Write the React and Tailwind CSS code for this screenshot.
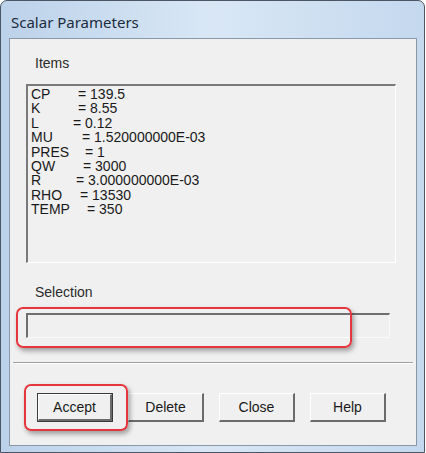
import React from "react";

const rows = [
  { n: "CP", v: "= 139.5", w: "w-[47px]" },
  { n: "K", v: "= 8.55", w: "w-[47px]" },
  { n: "L", v: "= 0.12", w: "w-[42px]" },
  { n: "MU", v: "= 1.520000000E-03", w: "w-[51px]" },
  { n: "PRES", v: "= 1", w: "w-[54px]" },
  { n: "QW", v: "= 3000", w: "w-[52px]" },
  { n: "R", v: "= 3.000000000E-03", w: "w-[45px]" },
  { n: "RHO", v: "= 13530", w: "w-[49px]" },
  { n: "TEMP", v: "= 350", w: "w-[56px]" },
];

function Btn({ label, isDefault }) {
  return (
    <div
      className={
        isDefault
          ? "w-[76px] h-[29px] border border-[#3a3a3a] bg-[#f0f0f0] flex"
          : "w-[76px] h-[29px] bg-[#f0f0f0] flex"
      }
    >
      <div className="flex-1 flex items-center justify-center border-t border-l border-t-white border-l-white border-r-2 border-b-2 border-r-[#6b6b6b] border-b-[#6b6b6b] text-[14px] text-[#1a1a1a] leading-4">
        {label}
      </div>
    </div>
  );
}

export default function App() {
  return (
    <div className="w-[426px] h-[453px] bg-white" style={{ fontFamily: '"Liberation Sans", Arial, sans-serif' }}>
      <div className="w-[425px] h-[453px] border border-[#4b5563] rounded-t-[7px] bg-gradient-to-r from-[#bcd2ea] via-[#d9e7f5] to-[#c4d8ee] flex flex-col pl-[8px] pr-[7px] pb-[6px]">
        <div className="h-[37px] flex items-center pl-[2px] pt-[4px]">
          <span className="text-[15px] text-[#1c2c40] leading-4" style={{ fontFamily: '"Noto Sans", "Open Sans", sans-serif' }}>
            Scalar Parameters
          </span>
        </div>
        <div className="flex-1 border border-[#8a97a7] bg-[#f0f0f0] relative flex flex-col pl-[16px]">
          <div className="mt-[16px] ml-[9px] h-4 text-[14px] leading-4 text-[#2a2a2a]">Items</div>
          <div className="mt-[13px] w-[370px] h-[179px] border-t-2 border-l-2 border-t-[#7a7a7a] border-l-[#7a7a7a] border-r border-b border-r-white border-b-white pt-[1px] pl-[3px]">
            {rows.map((r) => (
              <div key={r.n} className="h-[14.4px] leading-[14.4px] text-[14px] text-[#1a1a1a] whitespace-pre flex">
                <span className={r.w + " inline-block"}>{r.n}</span>
                <span>{r.v}</span>
              </div>
            ))}
          </div>
          <div className="mt-[21px] ml-[9px] h-4 text-[14px] leading-4 text-[#2a2a2a]">Selection</div>
          <div className="mt-[13px] w-[364px] h-[25px] border-t-2 border-l-2 border-t-[#6f6f6f] border-l-[#6f6f6f] border-r border-b border-r-[#fafafa] border-b-[#fafafa]" />
          <div className="mt-[24px] -ml-[13px] w-[400px] h-[2px] border-t border-t-[#a0a0a0] border-b border-b-white" />
          <div className="mt-[29px] ml-[11px] flex gap-[15px]">
            <Btn label="Accept" isDefault />
            <Btn label="Delete" />
            <Btn label="Close" />
            <Btn label="Help" />
          </div>
          <div className="absolute left-[6px] top-[268px] w-[336px] h-[41px] border-2 border-[#e5363d] rounded-[7px] shadow-[2px_3px_5px_rgba(0,0,0,0.35)]" />
          <div className="absolute left-[14px] top-[345px] w-[104px] h-[47px] border-2 border-[#e5363d] rounded-[7px] shadow-[2px_3px_5px_rgba(0,0,0,0.35)]" />
        </div>
      </div>
    </div>
  );
}
